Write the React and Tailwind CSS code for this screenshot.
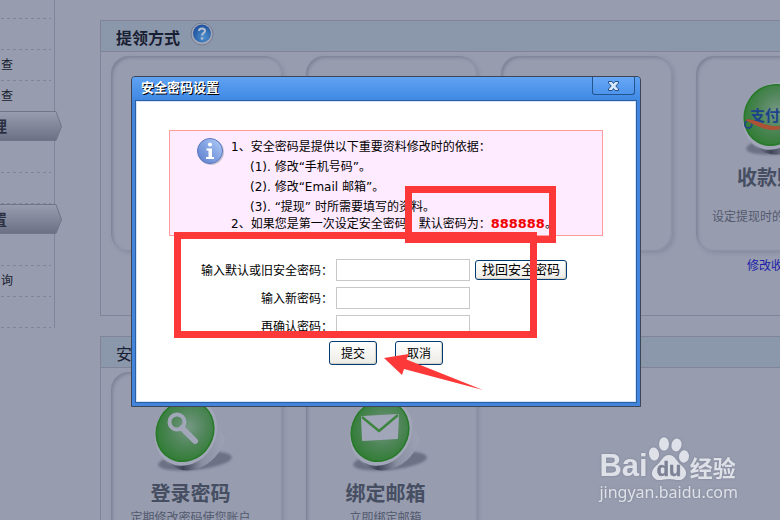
import React from "react";

const CJK = "font-['DejaVu_Sans','Noto_Sans_CJK_SC',sans-serif]";

function SideRow({ children, first }) {
  return (
    <li className={`flex w-[51px] shrink-0 flex-col justify-end ${first ? "h-[19px]" : "h-[31px]"}`}>
      <span className="flex flex-1 items-center pl-px text-xs text-[#181d2e]">{children}</span>
      <span className="h-px bg-[repeating-linear-gradient(90deg,transparent_0px,transparent_1px,#7f8497_1px,#7f8497_4px,transparent_4px,transparent_6px)]" />
    </li>
  );
}

function SideTab({ children }) {
  return (
    <li className="relative h-[31px] w-[63px] shrink-0">
      <svg className="absolute inset-0" width="63" height="31" aria-hidden="true">
        <defs>
          <linearGradient id="tab" x1="0" y1="0" x2="0" y2="1">
            <stop offset="0" stopColor="#989daf" />
            <stop offset="1" stopColor="#6c7084" />
          </linearGradient>
        </defs>
        <path d="M-2 .5H56L61.500 15.500L56 29.500H-2Z" fill="url(#tab)" stroke="#717588" />
      </svg>
      <span className="relative -ml-2 block text-[15px] leading-8 font-bold text-[#2b3042]">{children}</span>
    </li>
  );
}

function Coin({ id, children }) {
  return (
    <svg width="90" height="80" viewBox="0 0 90 80" className="shrink-0" aria-hidden="true">
      <defs>
        <radialGradient id={`g${id}`} cx=".52" cy=".42" r=".6">
          <stop offset="0" stopColor="#759883" />
          <stop offset=".5" stopColor="#50865a" />
          <stop offset="1" stopColor="#2f7c33" />
        </radialGradient>
        <linearGradient id={`r${id}`} x1="0" y1="0" x2="1" y2="0">
          <stop offset="0" stopColor="#9da2b4" />
          <stop offset=".35" stopColor="#3f4458" />
          <stop offset=".65" stopColor="#8b90a3" />
          <stop offset="1" stopColor="#9da2b4" />
        </linearGradient>
        <filter id={`b${id}`}>
          <feGaussianBlur stdDeviation="1" />
        </filter>
      </defs>
      <ellipse cx="49" cy="66" rx="37" ry="9" transform="rotate(-6 49 66)" fill="#6c7185" filter={`url(#b${id})`} />
      <path d="M14 60C24 74 38 78 51 74C65 69 75 58 79 44L66 20Z" fill={`url(#r${id})`} />
      <ellipse cx="40" cy="37" rx="30" ry="35" transform="rotate(30 40 37)" fill="#a1a6b8" />
      <ellipse cx="39" cy="36" rx="28" ry="31" transform="rotate(30 39 36)" fill={`url(#g${id})`} stroke="#267927" strokeWidth="1.500" />
      {children}
    </svg>
  );
}

function Card({ coin, title, note, link, left }) {
  return (
    <div className="flex w-[171px] shrink-0 flex-col">
      <section
        className={`flex h-[195px] flex-col rounded-[18px] pt-[23px] pr-3 shadow-[inset_2px_2px_3px_#7f8498,inset_-1px_-1px_1px_#8e93a6,2px_2px_4px_#868b9e] ${left ? "items-start" : "items-center"}`}
      >
        {coin && <div className={left ? "pl-[38px]" : ""}>{coin}</div>}
        {title && (
          <h3 className={`mt-1 text-xl leading-[30px] font-bold whitespace-nowrap text-[#464e62] ${left ? "pl-[41px]" : ""}`}>{title}</h3>
        )}
        {note && (
          <p className={`text-xs whitespace-nowrap text-[#535a6e] ${left ? "mt-4 pl-4" : "mt-px"}`}>{note}</p>
        )}
      </section>
      {link && (
        <a href="#account" className="mt-[7px] pl-[51px] text-xs whitespace-nowrap text-[#1c1caa]">
          {link}
        </a>
      )}
    </div>
  );
}

function Panel({ title, help, tall, children }) {
  return (
    <section className={`shrink-0 border border-r-0 border-[#7f8498] ${tall ? "h-[296px]" : "h-[264px]"}`}>
      <header className="flex h-[31px] items-center gap-[10px] border-b border-[#7f8498] bg-[#8b98ab] pl-[15px]">
        <h2 className={`pt-[6px] text-base leading-6 text-[#1a2033] ${tall ? "font-bold" : "font-normal"}`}>{title}</h2>
        {help}
      </header>
      <div className="flex gap-6 pt-1 pl-[10px]">{children}</div>
    </section>
  );
}

function HelpIcon() {
  return (
    <svg width="24" height="24" viewBox="0 0 24 24" className="mb-1" aria-hidden="true">
      <defs>
        <radialGradient id="help" cx=".6" cy=".7" r=".7">
          <stop offset="0" stopColor="#4d91cc" />
          <stop offset="1" stopColor="#1d4f9c" />
        </radialGradient>
      </defs>
      <circle cx="12" cy="12" r="11" fill="#a1a7b8" stroke="#747b90" />
      <circle cx="12" cy="11.500" r="9" fill="url(#help)" />
      <path d="M9 9C9 5.500 15 5.500 15 9C15 11 12 11 12 13.500" fill="none" stroke="#b4bed0" strokeWidth="2" />
      <circle cx="12" cy="16.500" r="1.300" fill="#b4bed0" />
    </svg>
  );
}

function InfoIcon() {
  return (
    <svg width="28" height="29" viewBox="0 0 28 29" className="shrink-0" aria-hidden="true">
      <defs>
        <linearGradient id="info" x1="0" y1="1" x2="1" y2="0">
          <stop offset="0" stopColor="#5c7dcc" />
          <stop offset=".55" stopColor="#87a6e4" />
          <stop offset="1" stopColor="#b4d0fa" />
        </linearGradient>
      </defs>
      <circle cx="15" cy="15" r="13" fill="#c9c3d4" />
      <circle cx="14" cy="14" r="12.500" fill="url(#info)" stroke="#5977bd" />
      <circle cx="14" cy="7.500" r="2.100" fill="#fff" />
      <path d="M10.500 11.500H16V20H18V22H10V20H12.500V13.500H10.500Z" fill="#fff" />
    </svg>
  );
}

function Field({ id, label, children }) {
  return (
    <div className="flex h-[22px] items-center">
      <label htmlFor={id} className="mr-[3px] w-[164px] pt-0.5 text-right whitespace-nowrap">
        {label}
      </label>
      <input id={id} type="password" className="h-[22px] w-[134px] border border-[#c8c8c8] bg-white px-1 outline-none" />
      {children}
    </div>
  );
}

function XpButton({ className, children }) {
  return (
    <button
      type="button"
      className={`rounded-[3px] border border-[#003c74] bg-linear-to-b from-white to-[#ecebe5] text-black shadow-[inset_-1px_-1px_1px_#d6d0c5] ${className}`}
    >
      {children}
    </button>
  );
}

function Dialog() {
  return (
    <div
      role="dialog"
      aria-labelledby="dialog-title"
      className="absolute top-[76px] left-[131px] w-[510px] rounded-t-[4px] border border-[#3d4654] bg-[#4384dc] px-[3px] pb-[3px] text-xs text-black"
    >
      <header className="-mx-[3px] flex h-[23px] items-start justify-between rounded-t-[3px] bg-linear-to-b from-[#60a2f3] to-[#3f89e4] pr-[5px] pl-[9px]">
        <h1 id="dialog-title" className="text-[13px] leading-[22px] font-bold text-white [text-shadow:1px_1px_0_#000]">
          安全密码设置
        </h1>
        <button
          type="button"
          aria-label="关闭"
          className="flex h-[18px] w-[43px] items-center justify-center rounded-b-[3px] border border-t-0 border-[#23558f] bg-linear-to-b from-[#68a7f5] to-[#4d94ec]"
        >
          <svg width="13" height="12" viewBox="0 0 13 12" aria-hidden="true">
            <path d="M1.500 1.500H5L6.500 3.500L8 1.500H11.500V3L8.800 6L11.500 9V10.500H8L6.500 8.500L5 10.500H1.500V9L4.200 6L1.500 3Z" fill="#d9e9fd" stroke="#244f88" />
          </svg>
        </button>
      </header>
      <div className="min-h-[303px] border border-[#2c5fa0] bg-white px-[33px] pt-[29px] shadow-[inset_0_0_0_1px_#d5e6fa]">
        <div className="flex min-h-[106px] gap-[7px] border border-[#ff9c9c] bg-[#ffebff] pt-[6px] pl-[26px]">
          <InfoIcon />
          <div className="leading-5 whitespace-nowrap">
            <p>1、安全密码是提供以下重要资料修改时的依据：</p>
            <ul className="pl-[19px]">
              <li>(1). 修改“手机号码”。</li>
              <li>(2). 修改“Email 邮箱”。</li>
              <li>(3). “提现” 时所需要填写的资料。</li>
            </ul>
            <p className="leading-[14px]">
              2、如果您是第一次设定安全密码，默认密码为：
              <strong className="text-[13px] leading-[14px] text-[#f00000]">888888</strong>。
            </p>
          </div>
        </div>
        <form className="mt-[23px]">
          <div className="flex flex-col gap-[6px]">
            <Field id="old-code" label="输入默认或旧安全密码：">
              <XpButton className="ml-[5px] h-5 w-[92px] text-[13px] leading-[18px]">找回安全密码</XpButton>
            </Field>
            <Field id="new-code" label="输入新密码：" />
            <Field id="repeat-code" label="再确认密码：" />
          </div>
          <div className="mt-1 flex gap-[18px] pl-40">
            <XpButton className="h-6 w-12 pt-0.5">提交</XpButton>
            <XpButton className="h-6 w-12 pt-0.5">取消</XpButton>
          </div>
        </form>
      </div>
    </div>
  );
}

function Watermark() {
  return (
    <div className="absolute right-[42px] bottom-[17px] text-[#dfe1e8] drop-shadow-[0_0_1px_#7c8194]">
      <div className="flex h-[44px] items-end font-['Liberation_Sans','Noto_Sans_CJK_SC',sans-serif] font-bold">
        <span className="text-[31px] leading-[30px]">Bai</span>
        <svg width="42" height="44" viewBox="0 0 42 44" fill="currentColor" aria-hidden="true">
          <ellipse cx="6" cy="17" rx="5" ry="6.500" transform="rotate(-10 6 17)" />
          <ellipse cx="16" cy="7" rx="5" ry="6.700" />
          <ellipse cx="28.500" cy="8" rx="5" ry="6.500" transform="rotate(12 28.500 8)" />
          <ellipse cx="36" cy="19.500" rx="5" ry="6.200" transform="rotate(8 36 19.500)" />
          <path d="M21 18C27 18 28 24 33 28C38 32 40 37 36 41C32 45 27 42 21 42C15 42 10 45 6 41C2 37 4 32 9 28C14 24 15 18 21 18Z" />
          <text x="21" y="39" textAnchor="middle" fontSize="20" fontFamily="Liberation Sans, sans-serif" fill="#7c8195" stroke="#7c8195" strokeWidth=".5">
            du
          </text>
        </svg>
        <span className="text-[23px] leading-[24px]">经验</span>
      </div>
      <p className="font-['Noto_Sans',sans-serif] text-base leading-[22px]">jingyan.baidu.com</p>
    </div>
  );
}

export default function App() {
  return (
    <div lang="zh-CN" className={`relative flex h-screen overflow-hidden bg-[#979caf] ${CJK}`}>
      <nav className="w-[55px] shrink-0 self-start border-r border-[#7f8498]">
        <ul className="flex flex-col">
          <SideRow first />
          <SideRow />
          <SideRow>查</SideRow>
          <SideRow>查</SideRow>
        </ul>
        <ul className="-mt-px flex flex-col">
          <SideTab>理</SideTab>
          <SideRow />
          <SideRow />
          <SideTab>置</SideTab>
          <SideRow />
          <SideRow>询</SideRow>
          <SideRow />
        </ul>
      </nav>

      <main className="ml-[45px] flex min-w-0 flex-1 flex-col gap-5 overflow-hidden pt-5">
        <Panel title="提领方式" help={<HelpIcon />} tall>
          <Card />
          <Card />
          <Card />
          <Card
            left
            title="收款账"
            note="设定提现时的"
            link="修改收"
            coin={
              <Coin id="pay">
                <text x="16" y="42" fontSize="15" fontWeight="bold" fill="#1c438b" fontFamily="Noto Sans CJK SC, sans-serif">
                  支付宝
                </text>
                <path d="M17 41C10 40 9 49 14 49C18 49 19 45 17 42" fill="none" stroke="#1c438b" strokeWidth="1.500" />
                <path d="M12 41C22 39 31 51 52 47C38 55 26 48 12 41Z" fill="#ad5235" stroke="#ad5235" />
              </Coin>
            }
          />
        </Panel>
        <Panel title="安">
          <Card
            title="登录密码"
            note="定期修改密码使您账户"
            coin={
              <Coin id="key">
                <circle cx="31" cy="27" r="7.500" fill="none" stroke="#a1a6b8" strokeWidth="4" />
                <path d="M36 33L49 46" stroke="#a1a6b8" strokeWidth="6" strokeLinecap="round" />
              </Coin>
            }
          />
          <Card
            title="绑定邮箱"
            note="立即绑定邮箱"
            coin={
              <Coin id="mail">
                <path d="M21 22L57 20L56 43L22 45Z" fill="#a1a6b8" stroke="#a1a6b8" strokeWidth="2" strokeLinejoin="round" />
                <path d="M21 22L38 36L57 20" fill="none" stroke="#3e8540" strokeWidth="2.500" strokeLinejoin="round" />
              </Coin>
            }
          />
        </Panel>
      </main>

      <Dialog />

      <div className="pointer-events-none absolute top-[232px] left-[174px] h-[106px] w-[363px] border-[7px] border-[#fc3838]" />
      <div className="pointer-events-none absolute top-[186px] left-[405px] h-[57px] w-[151px] border-[7px] border-[#fc3838]" />
      <svg className="pointer-events-none absolute top-[353px] left-[384px]" width="100" height="38" aria-hidden="true">
        <path d="M0 5L25 1L22.500 6.500L99 37L20 16L18 22Z" fill="#fc3838" />
      </svg>

      <Watermark />
    </div>
  );
}
